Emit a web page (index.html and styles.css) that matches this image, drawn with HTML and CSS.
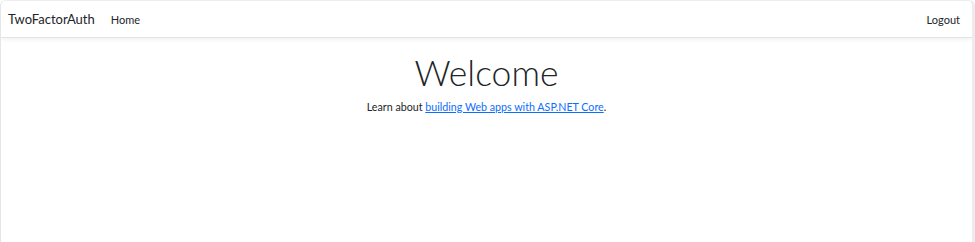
FILE: index.html
```html
<!DOCTYPE html>
<html lang="en">
<head>
<meta charset="utf-8">
<title>Home Page - TwoFactorAuth</title>
<link rel="stylesheet" href="styles.css">
</head>
<body>
<div class="frame">
  <header class="navbar">
    <div class="nav-left">
      <a class="brand" href="#">TwoFactorAuth</a>
      <a class="nav-link" href="#">Home</a>
    </div>
    <a class="nav-link" href="#">Logout</a>
  </header>
  <main class="content">
    <h1 class="display">Welcome</h1>
    <p class="lead-text">Learn about <a class="link" href="#">building Web apps with ASP.NET Core</a>.</p>
  </main>
</div>
</body>
</html>
```
FILE: styles.css
```css
html, body {
  margin: 0;
  height: 100%;
  background: #ffffff;
}
body {
  font-family: "Lato", "Noto Sans", sans-serif;
  color: #212529;
}
.frame {
  box-sizing: border-box;
  height: 100%;
  border-left: 1px solid #e6e6e6;
  border-right: 3px solid #ececec;
  border-top: 1px solid #eeeeee;
  border-radius: 6px 6px 0 0;
  overflow: hidden;
}
.navbar {
  height: 36px;
  display: flex;
  align-items: center;
  justify-content: space-between;
  padding: 0 12px 0 7px;
  border-bottom: 1px solid #e3e3e3;
  box-shadow: 0 2px 4px rgba(0,0,0,0.05);
}
.nav-left {
  display: flex;
  align-items: center;
  gap: 16px;
}
.brand {
  font-size: 13px;
  color: #212529;
  text-decoration: none;
}
.nav-link {
  font-size: 11px;
  color: #212529;
  text-decoration: none;
}
.content {
  text-align: center;
  padding-top: 14px;
}
.display {
  margin: 0;
  font-weight: 300;
  font-size: 35.5px;
  line-height: 1.2;
  color: #212529;
}
.lead-text {
  margin: 5px 0 0;
  font-size: 10.7px;
}
.link {
  color: #0d6efd;
  text-decoration: underline;
}
```
